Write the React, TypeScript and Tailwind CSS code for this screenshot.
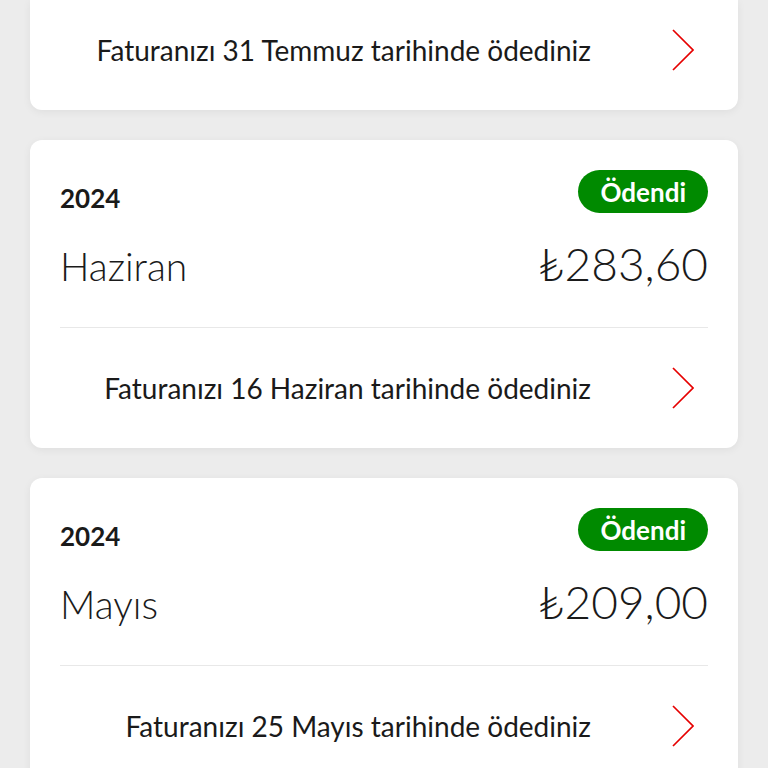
import React from 'react';

interface Bill {
    year: string;
    month: string;
    amount: string;
    paidText: string;
}

const bills: Bill[] = [
    { year: '2024', month: 'Haziran', amount: '₺283,60', paidText: 'Faturanızı 16 Haziran tarihinde ödediniz' },
    { year: '2024', month: 'Mayıs', amount: '₺209,00', paidText: 'Faturanızı 25 Mayıs tarihinde ödediniz' },
];

const font = { fontFamily: 'Lato, "Open Sans", sans-serif' };

const Chevron: React.FC = () => (
    <svg width="24" height="42" viewBox="0 0 24 42" fill="none" className="shrink-0">
        <path d="M3 1 L23 21 L3 41" stroke="#e60000" strokeWidth="1.7" />
    </svg>
);

const PaidRow: React.FC<{ text: string; className?: string }> = ({ text, className }) => (
    <div className={`flex items-center justify-end pl-[30px] pr-[44px] ${className || ''}`}>
        <span className="text-[28px] leading-none text-[#1a1a1a]">{text}</span>
        <div className="w-[79px]" />
        <Chevron />
    </div>
);

const BillCard: React.FC<{ bill: Bill }> = ({ bill }) => (
    <div className="bg-white rounded-[12px] shadow-[0_2px_8px_rgba(0,0,0,0.06)]">
        <div className="px-[30px] pt-[30px] pb-[40px]">
            <div className="flex items-start justify-between">
                <span className="mt-[15px] text-[26px] font-bold leading-none text-[#1a1a1a]">{bill.year}</span>
                <span className="h-[43px] px-[22px] rounded-full bg-[#008a00] text-white text-[26px] font-bold leading-none flex items-center">
                    Ödendi
                </span>
            </div>
            <div className="mt-[28px] flex items-baseline justify-between">
                <span className="text-[39px] font-light leading-none text-[#1a1a1a]">{bill.month}</span>
                <span className="text-[46px] font-light leading-none text-[#1a1a1a]">{bill.amount}</span>
            </div>
        </div>
        <div className="mx-[30px] h-px bg-[#e8e8e8]" />
        <PaidRow text={bill.paidText} className="h-[120px]" />
    </div>
);

export default function App() {
    return (
        <div className="h-screen overflow-hidden bg-[#ececec] px-[30px]" style={font}>
            <div className="bg-white rounded-b-[12px] shadow-[0_2px_8px_rgba(0,0,0,0.06)]">
                <PaidRow text="Faturanızı 31 Temmuz tarihinde ödediniz" className="h-[110px] pb-[10px]" />
            </div>
            <div className="flex flex-col gap-[30px] mt-[30px]">
                {bills.map((b, i) => (
                    <BillCard key={i} bill={b} />
                ))}
            </div>
        </div>
    );
}
